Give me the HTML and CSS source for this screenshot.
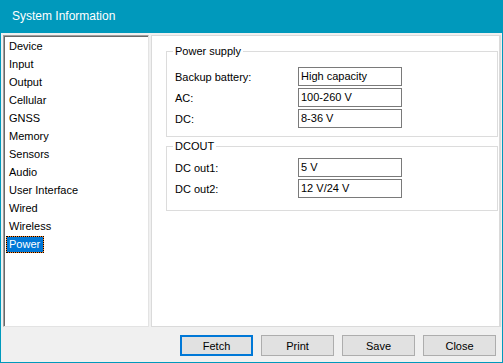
FILE: index.html
```html
<!DOCTYPE html>
<html>
<head>
<meta charset="utf-8">
<link rel="stylesheet" href="styles.css">
</head>
<body>
<div class="window">
  <div class="titlebar">System Information</div>
  <div class="client">
    <div class="main">
      <ul class="listbox">
        <li><span>Device</span></li>
        <li><span>Input</span></li>
        <li><span>Output</span></li>
        <li><span>Cellular</span></li>
        <li><span>GNSS</span></li>
        <li><span>Memory</span></li>
        <li><span>Sensors</span></li>
        <li><span>Audio</span></li>
        <li><span>User Interface</span></li>
        <li><span>Wired</span></li>
        <li><span>Wireless</span></li>
        <li class="selected"><span>Power</span></li>
      </ul>
      <div class="panel">
        <fieldset class="group group-power">
          <legend>Power supply</legend>
          <div class="row"><span class="label">Backup battery:</span><span class="field">High capacity</span></div>
          <div class="row"><span class="label">AC:</span><span class="field">100-260 V</span></div>
          <div class="row"><span class="label">DC:</span><span class="field">8-36 V</span></div>
        </fieldset>
        <fieldset class="group group-dcout">
          <legend>DCOUT</legend>
          <div class="row"><span class="label">DC out1:</span><span class="field">5 V</span></div>
          <div class="row"><span class="label">DC out2:</span><span class="field">12 V/24 V</span></div>
        </fieldset>
      </div>
    </div>
    <div class="buttons">
      <button class="btn btn-default">Fetch</button>
      <button class="btn">Print</button>
      <button class="btn">Save</button>
      <button class="btn">Close</button>
    </div>
  </div>
</div>
</body>
</html>
```

FILE: styles.css
```css
* { box-sizing: border-box; }
html, body { margin: 0; padding: 0; }
body {
  width: 503px;
  height: 363px;
  overflow: hidden;
  font-family: "Liberation Sans", Arial, sans-serif;
  font-size: 11px;
  color: #000;
  background: #fff;
}
.window {
  width: 503px;
  height: 363px;
  display: flex;
  flex-direction: column;
}
.titlebar {
  height: 33px;
  flex: none;
  background: #0099bc;
  color: #fff;
  font-size: 12px;
  line-height: 33px;
  padding-left: 12px;
}
.client {
  flex: 1;
  display: flex;
  flex-direction: column;
  background: #f0f0f0;
  border: 1px solid #0099bc;
  border-top: none;
}
.main {
  display: flex;
  gap: 2px;
  padding: 2px 1px 0 2px;
  height: 294px;
}
.listbox {
  margin: 0;
  padding: 0;
  list-style: none;
  width: 146px;
  flex: none;
  background: #fff;
  border: 1px solid;
  border-color: #a0a0a0 #e3e3e3 #e3e3e3 #a0a0a0;
  box-shadow: inset 1px 1px 0 #696969;
  padding-top: 1px;
  padding-left: 2px;
}
.listbox li {
  height: 18px;
  display: flex;
  align-items: center;
}
.listbox li span {
  line-height: 13px;
  padding: 1px 3px 1px 2px;
  border: 1px solid transparent;
}
.listbox li.selected span {
  background: #0078d7;
  color: #fff;
  border-color: #ff8728;
  outline: 1px dotted #000;
  outline-offset: -1px;
}
.panel {
  flex: 1;
  background: #fff;
  border: 1px solid #dadada;
  border-right: 2px solid #dadada;
  padding: 9px 1px 0 14px;
}
.group {
  margin: 0;
  padding: 9px 0 8px 8px;
  border: 1px solid #dcdcdc;
  display: flex;
  flex-direction: column;
  gap: 2px;
}
.group legend {
  padding: 0 2px;
  margin-left: -2px;
  line-height: 13px;
}
.group-dcout {
  margin-top: 3px;
  padding-top: 5px;
  padding-bottom: 12px;
}
.row {
  display: flex;
  align-items: center;
  height: 19px;
}
.label {
  width: 123px;
  flex: none;
}
.field {
  width: 104px;
  height: 19px;
  border: 1px solid #7a7a7a;
  padding-left: 2px;
  line-height: 17px;
  background: #fff;
}
.buttons {
  flex: 1;
  display: flex;
  justify-content: flex-end;
  align-items: flex-start;
  gap: 8px;
  padding: 8px 6px 0 0;
}
.btn {
  width: 73px;
  height: 21px;
  margin: 0;
  padding: 0;
  font-family: "Liberation Sans", Arial, sans-serif;
  font-size: 11px;
  color: #000;
  background: #e1e1e1;
  border: 1px solid #adadad;
}
.btn-default {
  border: 2px solid #0078d7;
}
```
